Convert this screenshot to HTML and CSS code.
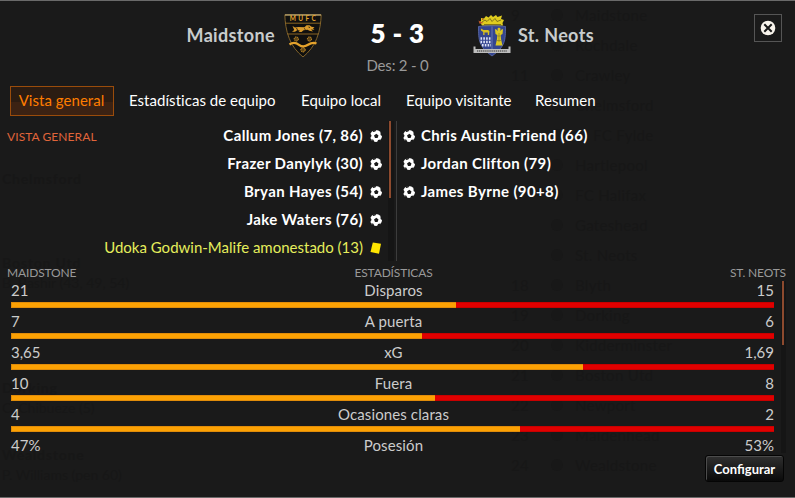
FILE: index.html
```html
<!DOCTYPE html>
<html lang="es">
<head>
    <meta charset="UTF-8">
    <meta name="viewport" content="width=device-width, initial-scale=1.0">
    <title>Maidstone 5 - 3 St. Neots</title>
    <link rel="stylesheet" href="styles.css">
</head>
<body>
    <svg width="0" height="0" class="defs">
        <symbol id="balon" viewBox="0 0 12 12">
            <circle cx="6" cy="6" r="6" fill="#fff"/>
            <path d="M6.300 3.700l2.200 1.800-.9 2.600H5L4 5.600z" fill="#1a1a1a"/>
            <path d="M3 .2L6.500 0 5.300 1.500 3 2zM10.500 1.500l1.500 1V6l-1.400-1zM0 3.500l1.500 1.700L1 7.300l-1 .5zM1.300 9.300l2.200.5.700 2.200H3zM8 10l2.200-.6.600 1L8.500 12H7.300z" fill="#1a1a1a"/>
        </symbol>
    </svg>

    <!-- pantalla anterior, detrás del panel -->
    <div class="fondo">
        <div class="fondo-goles">
            <h4>Chelmsford</h4>
            <h4 class="g2">Boston Utd</h4>
            <p>B. Bashir (43, 49, 54)</p>
            <h4 class="g3">Dorking</h4>
            <p>C. Chibueze (5)</p>
            <h4 class="g4">Wealdstone</h4>
            <p>P. Williams (pen 60)</p>
        </div>
        <div class="fondo-tabla">
            <span>9</span><i></i><b>Maidstone</b>
            <span></span><i></i><b>Rochdale</b>
            <span>11</span><i></i><b>Crawley</b>
            <span></span><i></i><b>Chelmsford</b>
            <span></span><i></i><b class="tapado">FC Fylde</b>
            <span></span><i></i><b>Hartlepool</b>
            <span></span><i></i><b>FC Halifax</b>
            <span></span><i></i><b>Gateshead</b>
            <span></span><i></i><b>St. Neots</b>
            <span>18</span><i></i><b>Blyth</b>
            <span>19</span><i></i><b>Dorking</b>
            <span>20</span><i></i><b>Kidderminster</b>
            <span>21</span><i></i><b>Boston Utd</b>
            <span>22</span><i></i><b>Newport</b>
            <span>23</span><i></i><b>Maidenhead</b>
            <span>24</span><i></i><b>Wealdstone</b>
        </div>
    </div>

    <div class="panel">
        <div class="header">
            <div class="equipo local">
                <span class="nombre">Maidstone</span>
                <svg class="escudo" width="38" height="44" viewBox="0 0 38 44">
                    <path d="M.8.8h36.400c-.3 7-1.200 16-4.400 23.500C30 32 25 38 19 43 13 38 8 32 5.200 24.300 2 16.800 1.100 7.800.8.800z" fill="#10100f" stroke="#80622a" stroke-width="1"/>
                    <path d="M1 1h36" stroke="#d8c48c"/>
                    <path d="M1.500 9.200h35M3.500 20h31" stroke="#a87a2a" stroke-width=".8"/>
                    <text x="20" y="7.400" class="mufc">MUFC</text>
                    <path d="M8.500 12l2.500 1.500 3.500-.5 6 .2 2-2h3l2 1.600 3 .4-1.500 1.300 1.500 1.300-3.500-.3 2 2-3.500-.7-2-1-4 .5-2 1.700h-3l1.500-1.300-2.500-.6-2.500 1.700h-3l2.200-1.700z" fill="#d99a2b"/>
                    <path d="M12 14.500l2 1M20 14.500l1.500 1M24.500 13l1.500.5" stroke="#10100f" stroke-width=".8"/>
                    <path d="M5.500 30.500c3.500-2.500 6.500-2 9.500.3s6 2 9 0 5.500-2.700 8.500-1.300" fill="none" stroke="#e5a32c" stroke-width="2.300"/>
                    <g fill="#5f4719" stroke="#d99a2b" stroke-width="1" stroke-dasharray="1.300 .6">
                        <circle cx="12.300" cy="25" r="2.100"/>
                        <circle cx="25.500" cy="25" r="2.100"/>
                        <circle cx="19" cy="35.800" r="2.200"/>
                    </g>
                </svg>
            </div>
            <div class="marcador">
                <div class="resultado">5 - 3</div>
                <div class="descanso">Des: 2 - 0</div>
            </div>
            <div class="equipo visitante">
                <svg class="escudo" width="38" height="43" viewBox="0 0 38 43">
                    <path d="M8 4l3 .5L13 2l2.500 1.500L18 1l2 2 3-2 1.500 2L29 1.500 28 5l3 1-1.500 3 .5 2.500H9L7.500 9 6 8l2-1z" fill="#e0cd1f"/>
                    <path d="M9 8l3-2 2 1.500 3-3 2 3 3-3 2 3 4-1.500M11 10.500h17" fill="none" stroke="#6b6018" stroke-width=".8"/>
                    <path d="M5.500 6.500l5 2.500-4 .7zM9 4l2 1.500-2 .5z" fill="#b9552a"/>
                    <path d="M5.500 12.500C12 11.500 26 11.500 32.500 12.500c0 13.500 0 20-13.500 29.500C5.500 32.500 5.500 26 5.500 12.500z" fill="#34458f" stroke="#6575b8" stroke-width=".7"/>
                    <path d="M19 12.500V38" stroke="#7f8bc4" stroke-width=".7"/>
                    <path d="M8 14.500l2.500 1.500h4.500l1.500 1-.5 4h-1.200v-2.500h-3.300V21h-1.300v-3L8 16.500z" fill="#d8c01e"/>
                    <path d="M7.500 24.500h10.500M7.500 28h10.500M9 31.300h9" stroke="#dde1f5" stroke-width="2.400" stroke-dasharray="1.600 1.200"/>
                    <path d="M24.500 14.500l1.500-1 1.500 1-.3 2.500 2-2 .8.500-.5 4.500-1.800 1 .3 4 1.500 6.500h-7l1.500-6.500.3-4-1.800-1-.5-4.500.8-.5 2 2z" fill="#dac723"/>
                    <path d="M26 19v9M24.500 22h3M24 26.500h4" stroke="#7d7226" stroke-width=".6"/>
                    <path d="M.5 32.500h2V35h33v-2.500h2V39H.5z" fill="#bdbdbd"/>
                    <path d="M4 37h30" stroke="#5c5c5c" stroke-width="1.500" stroke-dasharray="1.200 .7"/>
                </svg>
                <span class="nombre">St. Neots</span>
            </div>
            <button class="cerrar">
                <svg width="16" height="16" viewBox="0 0 16 16">
                    <circle cx="8" cy="8" r="7.300" fill="#f8f4ec"/>
                    <path d="M4.300 4.300l7.400 7.400M11.700 4.300l-7.400 7.400" stroke="#181818" stroke-width="2"/>
                </svg>
            </button>
        </div>

        <div class="tabs">
            <a class="tab activa">Vista general</a>
            <a class="tab t2">Estadísticas de equipo</a>
            <a class="tab t3">Equipo local</a>
            <a class="tab t4">Equipo visitante</a>
            <a class="tab t5">Resumen</a>
        </div>

        <div class="eventos">
            <h2 class="titulo">VISTA GENERAL</h2>
            <ul class="lista lista-local">
                <li>Callum Jones (7, 86) <svg class="icono"><use href="#balon"/></svg></li>
                <li>Frazer Danylyk (30) <svg class="icono"><use href="#balon"/></svg></li>
                <li>Bryan Hayes (54) <svg class="icono"><use href="#balon"/></svg></li>
                <li>Jake Waters (76) <svg class="icono"><use href="#balon"/></svg></li>
                <li class="amonestado">Udoka Godwin-Malife amonestado (13) <svg class="icono" viewBox="0 0 12 12"><path d="M2.800.5L11 1.800l-2 10L.5 10z" fill="#ffe600"/></svg></li>
            </ul>
            <div class="scroll scroll-eventos"><div class="barra"></div></div>
            <ul class="lista lista-visitante">
                <li><svg class="icono"><use href="#balon"/></svg> Chris Austin-Friend (66)</li>
                <li><svg class="icono"><use href="#balon"/></svg> Jordan Clifton (79)</li>
                <li><svg class="icono"><use href="#balon"/></svg> James Byrne (90+8)</li>
            </ul>
        </div>

        <div class="cabecera">
            <span>MAIDSTONE</span>
            <span>ESTADÍSTICAS</span>
            <span>ST. NEOTS</span>
        </div>

        <div class="estadisticas">
            <div class="filas">
                <div class="fila"><span>21</span><span>Disparos</span><span>15</span></div>
                <div class="linea"><div style="width: 58.33%"></div></div>
                <div class="fila"><span>7</span><span>A puerta</span><span>6</span></div>
                <div class="linea"><div style="width: 53.85%"></div></div>
                <div class="fila"><span>3,65</span><span>xG</span><span>1,69</span></div>
                <div class="linea"><div style="width: 75%"></div></div>
                <div class="fila"><span>10</span><span>Fuera</span><span>8</span></div>
                <div class="linea"><div style="width: 55.56%"></div></div>
                <div class="fila"><span>4</span><span>Ocasiones claras</span><span>2</span></div>
                <div class="linea"><div style="width: 66.67%"></div></div>
                <div class="fila"><span>47%</span><span>Posesión</span><span>53%</span></div>
            </div>
            <div class="scroll scroll-stats"><div class="barra"></div></div>
        </div>

        <div class="pie">
            <button class="configurar">Configurar</button>
        </div>
    </div>
</body>
</html>
```

FILE: styles.css
```css
* {
    box-sizing: border-box;
}

body {
    margin: 0;
    background-color: #1a1a1a;
    color: #ccc;
    font-family: Lato, "Open Sans", sans-serif;
    font-size: 15px;
    width: 795px;
    height: 498px;
    overflow: hidden;
    position: relative;
}

ul, h2, h4, p {
    margin: 0;
    padding: 0;
    list-style: none;
}

.defs {
    position: absolute;
}

.panel {
    position: relative;
    height: 498px;
    border-top: 1px solid #6a6a6a;
    border-bottom: 1px solid #6a6a6a;
}

/* Fondo */
.fondo {
    position: absolute;
    top: 0;
    left: 0;
    width: 795px;
    height: 498px;
    display: flex;
    justify-content: space-between;
    color: #171717;
}

.fondo-goles {
    padding: 169px 0 0 2px;
    font-size: 14px;
}

.fondo-goles p, .fondo-goles h4 {
    height: 20px;
    line-height: 20px;
}

.fondo-goles h4 {
    letter-spacing: 0.8px;
}

.fondo-goles .g2 { margin-top: 64px; }
.fondo-goles .g3 { margin-top: 85px; }
.fondo-goles .g4 { margin-top: 27px; }

.fondo-tabla {
    display: grid;
    grid-template-columns: 44px 20px 1fr;
    grid-auto-rows: 30px;
    align-items: center;
    width: 284px;
    font-size: 15px;
    letter-spacing: 0.3px;
}

.fondo-tabla b {
    font-weight: normal;
}

.fondo-tabla .tapado {
    padding-left: 18px;
}

.fondo-tabla i {
    width: 12px;
    height: 12px;
    margin-left: -4px;
    border-radius: 50%;
    background: #181818;
}

/* Header */
.header {
    display: grid;
    grid-template-columns: 322px 151px 1fr 28px;
    height: 84px;
    padding: 13px 13px 0 0;
}

.equipo {
    display: flex;
    align-items: flex-start;
    gap: 9px;
}

.equipo.local {
    justify-content: flex-end;
}

.equipo.visitante {
    gap: 7px;
}

.nombre {
    font-size: 18px;
    font-weight: bold;
    line-height: 42px;
    color: #c8cccd;
    letter-spacing: 0.35px;
}

.mufc {
    font: bold 6.5px Lato, sans-serif;
    fill: #e5a32c;
    letter-spacing: 2.4px;
    text-anchor: middle;
}

.marcador {
    text-align: center;
}

.resultado {
    font-size: 26px;
    font-weight: 800;
    line-height: 38px;
    letter-spacing: 0.4px;
    color: #fff;
}

.descanso {
    font-size: 15px;
    line-height: 27px;
    letter-spacing: -0.2px;
    color: #999;
}

.cerrar {
    display: flex;
    align-items: center;
    justify-content: center;
    width: 28px;
    height: 28px;
    padding: 0;
    background: #1a1a1a;
    border: 1px solid #555;
}

/* Tabs */
.tabs {
    display: flex;
    padding: 1px 0 0 10px;
    height: 36px;
}

.tab {
    height: 30px;
    line-height: 29px;
    letter-spacing: 0.04px;
    color: #fff;
    margin-right: 25px;
    white-space: nowrap;
}

.tab.activa {
    width: 104px;
    margin-right: 15px;
    line-height: 27px;
    padding-right: 1px;
    text-align: center;
    color: #ff7d00;
    background: linear-gradient(#2b1c12 54%, #3b2213 54%);
    border: 1px solid #9a4c0b;
}

.t2 { width: 147px; }
.t3 { width: 80px; }
.t4 { width: 104px; }

/* Goles y tarjetas */
.eventos {
    display: grid;
    grid-template-columns: 100px 282px 14px 1fr;
    height: 141px;
}

.titulo {
    padding-left: 7px;
    font-size: 12px;
    font-weight: normal;
    line-height: 31px;
    letter-spacing: 0.08px;
    color: #e0653a;
    white-space: nowrap;
}

.lista li {
    display: flex;
    align-items: center;
    height: 28px;
    padding-bottom: 1px;
    color: #fff;
    font-weight: bold;
    letter-spacing: 0.37px;
    white-space: nowrap;
}

.lista-local li {
    justify-content: flex-end;
    gap: 7px;
}

.lista-visitante {
    height: 140px;
    padding-left: 6px;
    border-left: 1px solid #3c3c3c;
}

.lista-visitante li {
    gap: 6px;
}

.lista .amonestado {
    color: #e5ee5c;
    font-weight: normal;
    letter-spacing: 0;
}

.icono {
    position: relative;
    top: 1px;
    width: 12px;
    height: 12px;
}

.scroll {
    background: #151515;
}

.scroll .barra {
    width: 2px;
    background: #8d4a2e;
}

.scroll-eventos {
    width: 6px;
    height: 140px;
    margin-left: 6px;
    padding-left: 1px;
}

.scroll-eventos .barra {
    height: 77px;
}

/* Estadisticas */
.cabecera {
    display: grid;
    grid-template-columns: 1fr 1fr 1fr;
    height: 19px;
    padding: 0 9px 0 7px;
    font-size: 12px;
    line-height: 22px;
    letter-spacing: -0.15px;
    color: #999;
}

.cabecera span:nth-child(2), .fila span:nth-child(2) {
    text-align: center;
}

.cabecera span:nth-child(2) {
    padding-right: 6px;
}

.cabecera span:nth-child(3), .fila span:nth-child(3) {
    text-align: right;
}

.estadisticas {
    display: flex;
    height: 174px;
    padding-left: 11px;
}

.filas {
    width: 763px;
    padding-top: 1px;
}

.fila {
    display: grid;
    grid-template-columns: 1fr 1fr 1fr;
    height: 20px;
    line-height: 17px;
    color: #ccc;
}

.fila span:nth-child(2) {
    padding-left: 2px;
    letter-spacing: 0.12px;
}

.linea {
    height: 6px;
    margin-bottom: 5px;
    background: #e10000;
    border-top: 1px solid #c80000;
    border-bottom: 1px solid #c80000;
}

.linea div {
    height: 6px;
    margin-top: -1px;
    background: #fca103;
    border: 1px solid #e08c0a;
    border-right: none;
}

.scroll-stats {
    width: 5px;
    height: 172px;
    margin-left: 7px;
    padding-left: 1px;
}

.scroll-stats .barra {
    height: 64px;
}

.pie {
    display: flex;
    justify-content: flex-end;
    padding-right: 11px;
}

.configurar {
    width: 79px;
    height: 27px;
    padding: 0;
    font-family: inherit;
    font-size: 13px;
    font-weight: bold;
    color: #fff;
    background: linear-gradient(#303030, #1c1c1c 50%, #0a0a0a);
    border: 1px solid #050505;
    border-radius: 3px;
    box-shadow: inset 1px 1px 0 #4c4c4c;
}
```
